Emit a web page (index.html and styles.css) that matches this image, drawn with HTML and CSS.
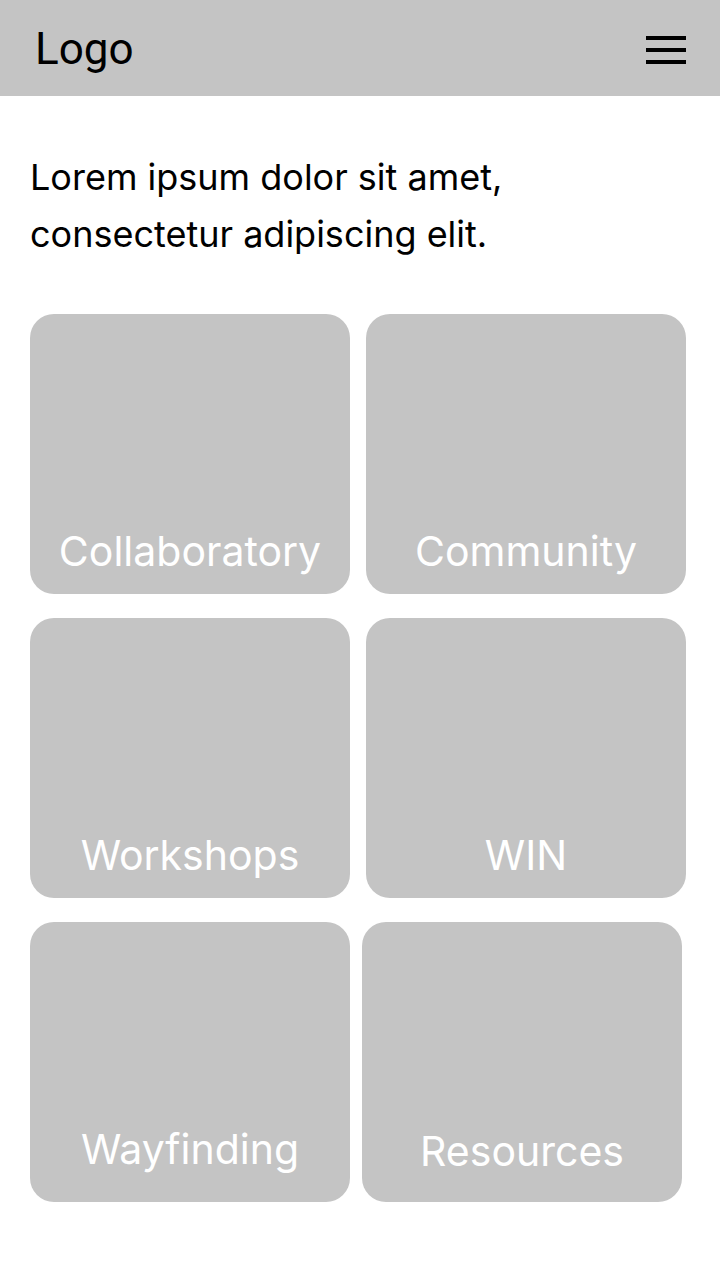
FILE: index.html
```html
<!DOCTYPE html>
<html lang="en">
<head>
<meta charset="utf-8">
<title>Home</title>
<link rel="stylesheet" href="styles.css">
</head>
<body>
<header class="topbar">
  <div class="logo">Logo</div>
  <button class="menu" aria-label="Menu">
    <svg width="40" height="28" viewBox="0 0 40 28" aria-hidden="true">
      <rect x="0" y="0" width="40" height="4" fill="#000"/>
      <rect x="0" y="12" width="40" height="4" fill="#000"/>
      <rect x="0" y="24" width="40" height="4" fill="#000"/>
    </svg>
  </button>
</header>
<main class="content">
  <p class="intro">Lorem ipsum dolor sit amet, consectetur adipiscing elit.</p>
  <div class="grid">
    <a class="card">Collaboratory</a>
    <a class="card">Community</a>
    <a class="card card--r2">Workshops</a>
    <a class="card card--r2">WIN</a>
    <a class="card card--wayfinding">Wayfinding</a>
    <a class="card card--resources">Resources</a>
  </div>
</main>
</body>
</html>
```
FILE: styles.css
```css
* { box-sizing: border-box; }
html, body { margin: 0; padding: 0; background: #fff; }
body {
  width: 720px;
  font-family: Inter, "Noto Sans", sans-serif;
  color: #000;
}

.topbar {
  height: 96px;
  background: #c4c4c4;
  display: flex;
  align-items: center;
  justify-content: space-between;
  padding: 0 34px 0 35px;
}
.logo {
  font-family: Roboto, "Liberation Sans", sans-serif;
  font-size: 44px;
  line-height: normal;
  margin-top: 2px;
}
.menu {
  border: 0;
  padding: 0;
  background: none;
  display: block;
  width: 40px;
  height: 28px;
  margin-top: 4px;
}
.menu svg { display: block; }

.content { padding: 53px 30px 0 30px; }
.intro {
  margin: 0;
  font-size: 36px;
  line-height: 57px;
}
.grid {
  margin-top: 51px;
  display: grid;
  grid-template-columns: 320px 320px;
  grid-auto-rows: 280px;
  column-gap: 16px;
  row-gap: 24px;
}
.card {
  width: 320px;
  justify-self: start;
  background: #c4c4c4;
  border-radius: 24px;
  display: flex;
  align-items: flex-end;
  justify-content: center;
  color: #fff;
  font-size: 41px;
  line-height: normal;
  padding-bottom: 18px;
  text-decoration: none;
}
.card--r2 { padding-bottom: 18px; }
.card--wayfinding { padding-bottom: 28px; }
.card--resources { padding-bottom: 26px; margin-left: -4px; }
```
